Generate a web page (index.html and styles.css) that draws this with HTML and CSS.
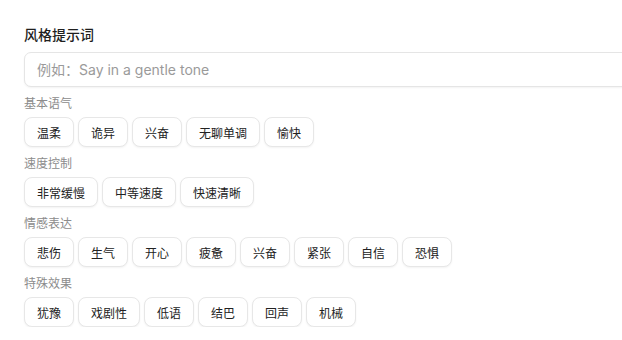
FILE: index.html
```html
<!DOCTYPE html>
<html lang="zh-CN">
<head>
  <meta charset="UTF-8">
  <meta name="viewport" content="width=device-width, initial-scale=1.0">
  <title>风格提示词</title>
  <link rel="stylesheet" href="styles.css">
</head>
<body>

<div class="panel">
  <h3 class="title">风格提示词</h3>
  <input class="prompt-input" type="text" placeholder="例如：Say in a gentle tone">

  <div class="groups">
    <div class="group">
      <p class="group-label">基本语气</p>
      <div class="chips">
        <button class="chip">温柔</button>
        <button class="chip">诡异</button>
        <button class="chip">兴奋</button>
        <button class="chip">无聊单调</button>
        <button class="chip">愉快</button>
      </div>
    </div>

    <div class="group">
      <p class="group-label">速度控制</p>
      <div class="chips">
        <button class="chip">非常缓慢</button>
        <button class="chip">中等速度</button>
        <button class="chip">快速清晰</button>
      </div>
    </div>

    <div class="group">
      <p class="group-label">情感表达</p>
      <div class="chips">
        <button class="chip">悲伤</button>
        <button class="chip">生气</button>
        <button class="chip">开心</button>
        <button class="chip">疲惫</button>
        <button class="chip">兴奋</button>
        <button class="chip">紧张</button>
        <button class="chip">自信</button>
        <button class="chip">恐惧</button>
      </div>
    </div>

    <div class="group">
      <p class="group-label">特殊效果</p>
      <div class="chips">
        <button class="chip">犹豫</button>
        <button class="chip">戏剧性</button>
        <button class="chip">低语</button>
        <button class="chip">结巴</button>
        <button class="chip">回声</button>
        <button class="chip">机械</button>
      </div>
    </div>
  </div>
</div>

</body>
</html>
```

FILE: styles.css
```css
* {
  margin: 0;
  padding: 0;
  box-sizing: border-box;
}

body {
  background: #fff;
  font-family: Inter, "Noto Sans CJK SC", sans-serif;
  color: #222;
  overflow: hidden;
}

.panel {
  width: 720px;
  padding: 25px 0 0 24px;
  display: flex;
  flex-direction: column;
}

.title {
  font-size: 14px;
  line-height: 20px;
  font-weight: 500;
  color: #1f1f1f;
  margin-bottom: 7px;
}

.prompt-input {
  width: 100%;
  height: 35px;
  padding: 0 12px;
  border: 1px solid #e5e5e5;
  border-radius: 7px;
  box-shadow: 0 1px 2px rgba(0, 0, 0, 0.05);
  font-family: inherit;
  font-size: 14px;
  color: #222;
  outline: none;
}

.prompt-input::placeholder {
  color: #9a9a9a;
}

.groups {
  margin-top: 8px;
  display: flex;
  flex-direction: column;
  gap: 8px;
}

.group-label {
  font-size: 12px;
  line-height: 18px;
  color: #8c8c8c;
  margin-bottom: 4px;
}

.chips {
  display: flex;
  gap: 4px;
}

.chip {
  height: 30px;
  padding: 0 12px;
  border: 1px solid #e7e7e7;
  border-radius: 8px;
  background: #fff;
  box-shadow: 0 1px 2px rgba(0, 0, 0, 0.05);
  font-family: inherit;
  font-size: 12px;
  color: #222;
  cursor: pointer;
}

.chip:hover {
  background: #f6f6f6;
}
```
